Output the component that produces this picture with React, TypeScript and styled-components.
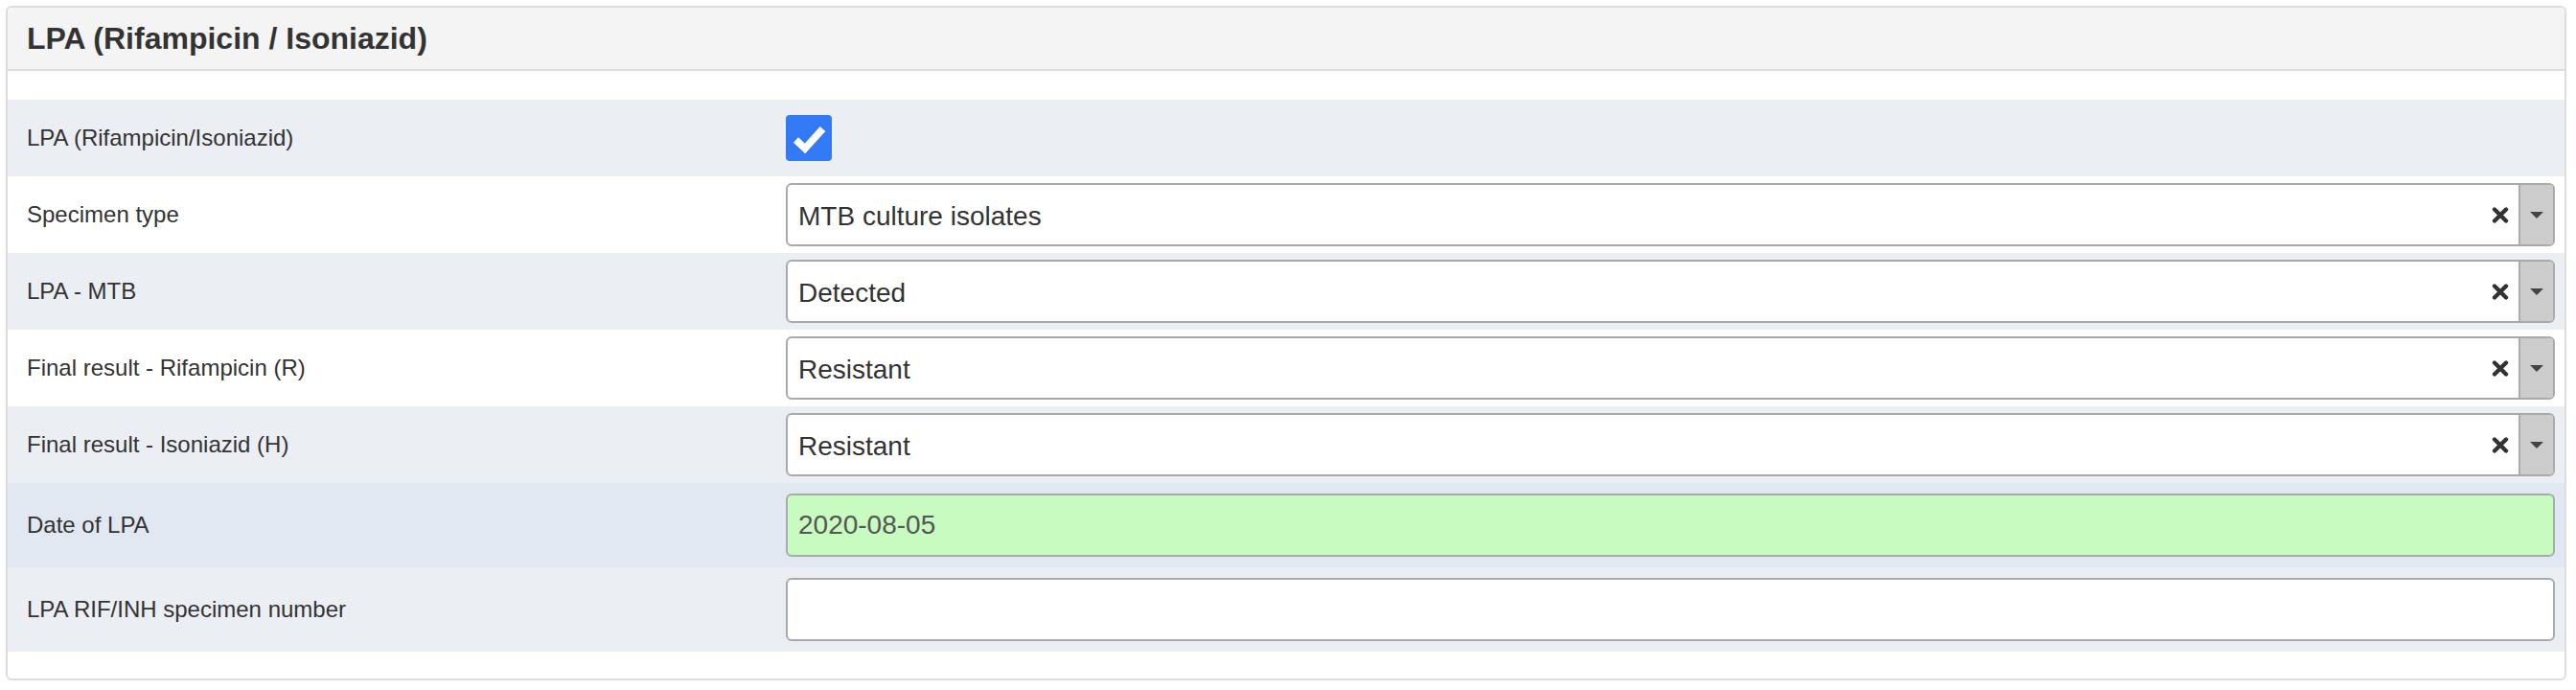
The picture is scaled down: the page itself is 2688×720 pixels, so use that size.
import styled, { createGlobalStyle } from 'styled-components';

const GlobalStyle = createGlobalStyle`
  * {
    box-sizing: border-box;
  }

  body {
    margin: 0;
    background: #ffffff;
    font-family: 'Liberation Sans', Arial, sans-serif;
    color: #333333;
  }
`;

type Shade = 'grey' | 'white' | 'active';

type Field =
  | { label: string; kind: 'checkbox'; shade: Shade }
  | { label: string; kind: 'select'; value: string; shade: Shade }
  | { label: string; kind: 'text'; value: string; shade: Shade; filled?: boolean };

const fields: Field[] = [
  { label: 'LPA (Rifampicin/Isoniazid)', kind: 'checkbox', shade: 'grey' },
  { label: 'Specimen type', kind: 'select', value: 'MTB culture isolates', shade: 'white' },
  { label: 'LPA - MTB', kind: 'select', value: 'Detected', shade: 'grey' },
  { label: 'Final result - Rifampicin (R)', kind: 'select', value: 'Resistant', shade: 'white' },
  { label: 'Final result - Isoniazid (H)', kind: 'select', value: 'Resistant', shade: 'grey' },
  { label: 'Date of LPA', kind: 'text', value: '2020-08-05', shade: 'active', filled: true },
  { label: 'LPA RIF/INH specimen number', kind: 'text', value: '', shade: 'grey' },
];

const IconTimes = () => (
  <svg width='18' height='17' viewBox='0 0 18 17' aria-hidden='true'>
    <path d='M3 2.5 L15 14.5 M15 2.5 L3 14.5' stroke='#333333' strokeWidth='4.4' strokeLinecap='round' fill='none' />
  </svg>
);

const IconCheck = () => (
  <svg width='48' height='48' viewBox='0 0 48 48' aria-hidden='true'>
    <path d='M10.5 26 L20 35 L38.5 14.5' stroke='#ffffff' strokeWidth='7.5' strokeLinejoin='miter' fill='none' />
  </svg>
);

const SelectField = ({ value }: { value: string }) => (
  <SelectBox>
    <SelectValue>{value}</SelectValue>
    <ClearButton>
      <IconTimes />
    </ClearButton>
    <ArrowBox>
      <Caret />
    </ArrowBox>
  </SelectBox>
);

const App = () => {
  return (
    <>
      <GlobalStyle />
      <Panel>
        <PanelHeading>
          <PanelTitle>LPA (Rifampicin / Isoniazid)</PanelTitle>
        </PanelHeading>
        <PanelBody>
          {fields.map((field) => (
            <FieldRow
              key={field.label}
              $shade={field.shade}
              $pad={field.kind === 'checkbox' ? 16 : field.kind === 'select' ? 7 : 11}
            >
              <FieldLabel>{field.label}</FieldLabel>
              {field.kind === 'checkbox' && (
                <CheckBox>
                  <IconCheck />
                </CheckBox>
              )}
              {field.kind === 'select' && <SelectField value={field.value} />}
              {field.kind === 'text' && <TextInput $filled={!!field.filled}>{field.value}</TextInput>}
            </FieldRow>
          ))}
        </PanelBody>
      </Panel>
    </>
  );
};

export default App;

const shadeColors: Record<Shade, string> = {
  grey: '#ebeef2',
  white: '#ffffff',
  active: '#e1e8f1',
};

const Panel = styled.div`
  margin: 6px 10px 10px 6px;
  border: 2px solid #dddddd;
  border-radius: 6px;
  background: #ffffff;
  overflow: hidden;
`;

const PanelHeading = styled.div`
  display: flex;
  align-items: center;
  height: 66px;
  padding: 0 20px;
  background: #f4f4f4;
  border-bottom: 2px solid #dcdcdc;
`;

const PanelTitle = styled.h3`
  margin: 0;
  font-size: 32px;
  font-weight: 700;
  color: #333333;
  line-height: 1;
`;

const PanelBody = styled.div`
  padding: 30px 0 28px;
`;

const FieldRow = styled.div<{ $shade: Shade; $pad: number }>`
  display: grid;
  grid-template-columns: 792px 1fr;
  align-items: center;
  padding: ${(p) => p.$pad}px 10px ${(p) => p.$pad}px 20px;
  background: ${(p) => shadeColors[p.$shade]};
`;

const FieldLabel = styled.div`
  font-size: 24px;
  color: #333333;
`;

const CheckBox = styled.div`
  width: 48px;
  height: 48px;
  border-radius: 4px;
  background: #3179f5;
  display: flex;
  align-items: center;
  justify-content: center;
`;

const SelectBox = styled.div`
  display: flex;
  align-items: stretch;
  height: 66px;
  border: 2px solid #aaaaaa;
  border-radius: 6px;
  background: #ffffff;
  overflow: hidden;
`;

const SelectValue = styled.div`
  flex: 1;
  display: flex;
  align-items: center;
  padding: 4px 0 0 11px;
  font-size: 28px;
  color: #333333;
`;

const ClearButton = styled.div`
  display: flex;
  align-items: center;
  margin-right: 10px;
`;

const ArrowBox = styled.div`
  width: 36px;
  display: flex;
  align-items: center;
  justify-content: center;
  background: #cccccc;
  border-left: 2px solid #aaaaaa;
`;

const Caret = styled.span`
  width: 0;
  height: 0;
  border-left: 7px solid transparent;
  border-right: 7px solid transparent;
  border-top: 7px solid #444444;
`;

const TextInput = styled.div<{ $filled: boolean }>`
  display: flex;
  align-items: center;
  height: 66px;
  padding-left: 11px;
  border: 2px solid #aaaaaa;
  border-radius: 6px;
  background: ${(p) => (p.$filled ? '#c7fbbf' : '#ffffff')};
  font-size: 28px;
  color: #555555;
`;
